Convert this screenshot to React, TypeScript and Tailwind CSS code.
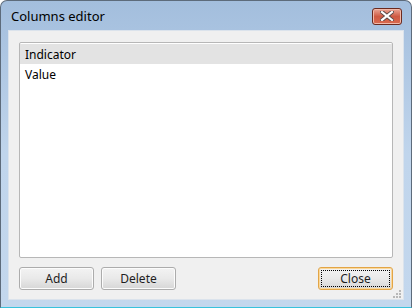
import React from 'react';

const font = { fontFamily: '"Noto Sans", "Open Sans", sans-serif' };

const WinButton: React.FC<{ label: string; focused?: boolean }> = ({ label, focused }) => (
  <button
    className={`relative w-[75px] h-[23px] rounded-[3px] border text-[12px] text-[#1e1e1e] bg-gradient-to-b from-[#f3f3f3] via-[#e9e9e9] to-[#d6d6d6] ${focused ? 'border-[#e2a547] shadow-[inset_0_0_0_1px_#fbd89a]' : 'border-[#acacac] shadow-[inset_0_0_0_1px_#fcfcfc]'}`}
  >
    {focused && <span className="absolute inset-[2px] border border-dotted border-black" />}
    <span className="relative">{label}</span>
  </button>
);

const CloseX = () => (
  <div className="w-[30px] h-[17px] rounded-[3px] border border-[#6b2a1f] bg-gradient-to-b from-[#e9a596] via-[#cf5a43] to-[#d96a4f] flex items-center justify-center shadow-[inset_0_0_0_1px_#f1b9aa]">
    <svg width="14" height="10" viewBox="0 0 14 10">
      <path d="M2 1 L12 9 M12 1 L2 9" stroke="#5b4a48" strokeWidth="4" strokeLinecap="square" />
      <path d="M2 1 L12 9 M12 1 L2 9" stroke="#ffffff" strokeWidth="2.2" strokeLinecap="square" />
    </svg>
  </div>
);

const Grip = () => (
  <svg className="absolute right-[2px] bottom-[1px]" width="8" height="8" viewBox="0 0 8 8">
    {[[6, 0], [3, 3], [6, 3], [0, 6], [3, 6], [6, 6]].map(([x, y], i) => (
      <rect key={i} x={x} y={y} width="2" height="2" fill="#b8b8b8" />
    ))}
  </svg>
);

export default function App() {
  const rows = ['Indicator', 'Value'];
  return (
    <div className="w-[412px] h-[308px] bg-white" style={font}>
      <div className="w-full h-full flex flex-col rounded-t-[7px] border border-[#5d6b7b] border-b-[#38c2dc] bg-gradient-to-b from-[#a3bedd] via-[#c0d5ec] to-[#c3d7ed] overflow-hidden">
        <div className="h-[29px] flex items-center justify-between pl-[10px] pr-[9px]">
          <span className="text-[13px] text-black mt-[3px]">Columns editor</span>
          <div className="mt-[1px]"><CloseX /></div>
        </div>
        <div className="relative mx-[7px] h-[270px] bg-[#f0f0f0] border border-[#dbe3ec] flex flex-col px-[10px] pt-[11px]">
          <div className="h-[216px] bg-white border border-[#b7b7b7] rounded-[2px] flex flex-col pt-[1px]">
            {rows.map((r, i) => (
              <div
                key={r}
                className={`h-[20px] flex items-center pl-[5px] pt-[2px] text-[12px] text-black ${i === 0 ? 'bg-[#e3e3e3]' : ''}`}
              >
                {r}
              </div>
            ))}
          </div>
          <div className="flex items-center gap-[7px] mt-[9px]">
            <WinButton label="Add" />
            <WinButton label="Delete" />
            <div className="flex-1" />
            <WinButton label="Close" focused />
          </div>
          <Grip />
        </div>
      </div>
    </div>
  );
}
